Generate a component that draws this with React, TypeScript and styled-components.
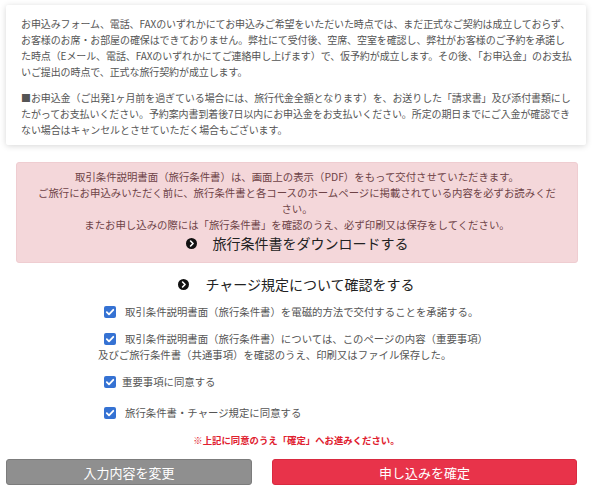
import React from "react";
import styled, { createGlobalStyle } from "styled-components";

const Global = createGlobalStyle`
  html, body { margin: 0; padding: 0; background: #ffffff; }
  body { font-family: "Noto Sans CJK JP", "Noto Sans", sans-serif; }
`;

const Page = styled.div`
  width: 593px;
  display: flex;
  flex-direction: column;
`;

const NoticeCard = styled.div`
  margin: 5px 7px 0 6px;
  padding: 11px 8px 7px 15px;
  background: #fff;
  box-shadow: 0 1px 6px rgba(0, 0, 0, 0.16);
  border-radius: 2px;
  color: #555;
  font-size: 10px;
  letter-spacing: -0.1px;
  line-height: 16px;
  display: flex;
  flex-direction: column;
  gap: 10px;
  white-space: nowrap;
`;

const Para = styled.p`
  margin: 0;
`;

const AlertBox = styled.div`
  margin: 17px 15px 0 16px;
  padding: 6px 12px 9px;
  background: #f4d7da;
  border: 1px solid #efcdd1;
  border-radius: 3px;
  color: #6e4347;
  font-size: 10.4px;
  line-height: 16px;
  text-align: center;
  white-space: nowrap;
`;

const LinkRow = styled.div<{ $top?: number }>`
  margin-top: ${(p) => p.$top ?? 0}px;
  display: flex;
  justify-content: center;
  align-items: center;
  gap: 16px;
  color: #222;
  font-size: 14px;
  line-height: 20px;
`;

const Rules = styled.div`
  margin-top: 10px;
  padding-left: 98px;
  display: flex;
  flex-direction: column;
  color: #555;
  font-size: 10.4px;
  line-height: 16px;
`;

const CheckRow = styled.label<{ $top: number }>`
  display: block;
  margin-top: ${(p) => p.$top}px;
`;

const Box = styled.span<{ $gap: number }>`
  display: inline-block;
  vertical-align: -2px;
  width: 12px;
  height: 12px;
  margin: 0 ${(p) => p.$gap}px 0 6px;
  border-radius: 2px;
  background: #3572d3;
  position: relative;
`;

const Note = styled.div`
  margin-top: 12px;
  text-align: center;
  color: #e0202e;
  font-size: 9.4px;
  font-weight: bold;
  line-height: 14px;
`;

const Buttons = styled.div`
  margin-top: 12px;
  padding-left: 6px;
  display: grid;
  grid-template-columns: 246px 305px;
  column-gap: 20px;
`;

const Button = styled.button<{ $primary?: boolean }>`
  height: 26px;
  border: 1px solid ${(p) => (p.$primary ? "#d92a40" : "#7c7c7c")};
  border-radius: 3px;
  background: ${(p) => (p.$primary ? "#e8334a" : "#8f8f8f")};
  color: #fff;
  font-family: "Noto Sans CJK JP", sans-serif;
  font-size: 13px;
  padding: 0;
`;

const CircleIcon = () => (
  <svg width="11" height="11" viewBox="0 0 12 12" aria-hidden>
    <circle cx="6" cy="6" r="6" fill="#111" />
    <path d="M5 3.3 L7.7 6 L5 8.7" stroke="#fff" strokeWidth="1.8" fill="none" strokeLinecap="round" strokeLinejoin="round" />
  </svg>
);

const Check = ({ gap }: { gap: number }) => (
  <Box $gap={gap}>
    <svg width="12" height="12" viewBox="0 0 12 12" style={{ position: "absolute", left: 0, top: 0 }} aria-hidden>
      <path d="M2.8 6.2 L5 8.4 L9.3 3.8" stroke="#fff" strokeWidth="1.8" fill="none" strokeLinecap="round" strokeLinejoin="round" />
    </svg>
  </Box>
);

export default function App() {
  return (
    <Page>
      <Global />
      <NoticeCard>
        <Para>
          お申込みフォーム、電話、FAXのいずれかにてお申込みご希望をいただいた時点では、まだ正式なご契約は成立しておらず、
          <br />
          お客様のお席・お部屋の確保はできておりません。弊社にて受付後、空席、空室を確認し、弊社がお客様のご予約を承諾し
          <br />
          た時点（Eメール、電話、FAXのいずれかにてご連絡申し上げます）で、仮予約が成立します。その後、「お申込金」のお支払
          <br />
          いご提出の時点で、正式な旅行契約が成立します。
        </Para>
        <Para>
          ■お申込金（ご出発1ヶ月前を過ぎている場合には、旅行代金全額となります）を、お送りした「請求書」及び添付書類にし
          <br />
          たがってお支払いください。予約案内書到着後7日以内にお申込金をお支払いください。所定の期日までにご入金が確認でき
          <br />
          ない場合はキャンセルとさせていただく場合もございます。
        </Para>
      </NoticeCard>

      <AlertBox>
        取引条件説明書面（旅行条件書）は、画面上の表示（PDF）をもって交付させていただきます。
        <br />
        ご旅行にお申込みいただく前に、旅行条件書と各コースのホームページに掲載されている内容を必ずお読みくだ
        <br />
        さい。
        <br />
        またお申し込みの際には「旅行条件書」を確認のうえ、必ず印刷又は保存をしてください。
        <LinkRow>
          <CircleIcon />
          <span>旅行条件書をダウンロードする</span>
        </LinkRow>
      </AlertBox>

      <LinkRow $top={11}>
        <CircleIcon />
        <span>チャージ規定について確認をする</span>
      </LinkRow>

      <Rules>
        <CheckRow $top={0}>
          <Check gap={9} />
          取引条件説明書面（旅行条件書）を電磁的方法で交付することを承諾する。
        </CheckRow>
        <CheckRow $top={11}>
          <Check gap={9} />
          取引条件説明書面（旅行条件書）については、このページの内容（重要事項）
          <br />
          及びご旅行条件書（共通事項）を確認のうえ、印刷又はファイル保存した。
        </CheckRow>
        <CheckRow $top={11}>
          <Check gap={6} />
          重要事項に同意する
        </CheckRow>
        <CheckRow $top={15}>
          <Check gap={9} />
          旅行条件書・チャージ規定に同意する
        </CheckRow>
      </Rules>

      <Note>※上記に同意のうえ「確定」へお進みください。</Note>

      <Buttons>
        <Button type="button">入力内容を変更</Button>
        <Button type="button" $primary>
          申し込みを確定
        </Button>
      </Buttons>
    </Page>
  );
}
